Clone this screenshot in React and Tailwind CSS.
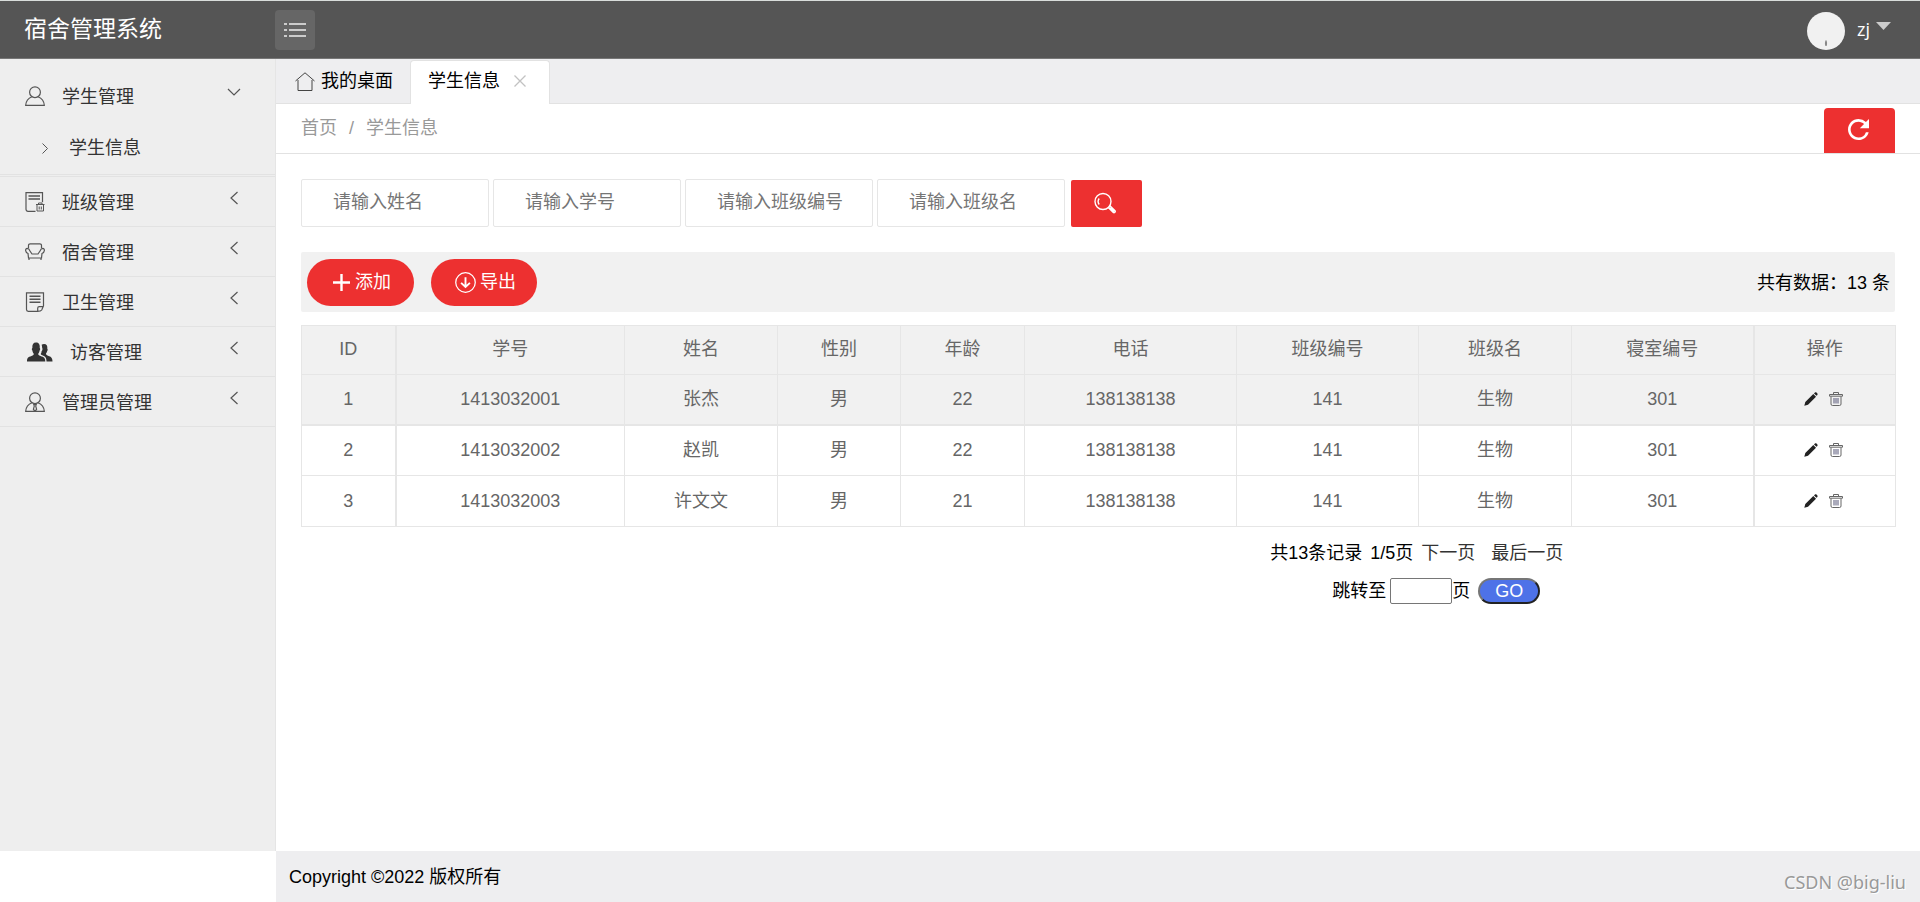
import { useState } from "react";

const menus = [
  { name: "班级管理", icon: ClassIcon },
  { name: "宿舍管理", icon: SofaIcon },
  { name: "卫生管理", icon: NoteIcon },
  { name: "访客管理", icon: VisitorIcon, wide: true },
  { name: "管理员管理", icon: AdminIcon },
];

const filters = ["请输入姓名", "请输入学号", "请输入班级编号", "请输入班级名"];

const columns = [
  { title: "ID", width: "w-[94px]" },
  { title: "学号", width: "w-[229px]" },
  { title: "姓名", width: "w-[153px]" },
  { title: "性别", width: "w-[123px]" },
  { title: "年龄", width: "w-[124px]" },
  { title: "电话", width: "w-[212px]" },
  { title: "班级编号", width: "w-[182px]" },
  { title: "班级名", width: "w-[153px]" },
  { title: "寝室编号", width: "w-[182px]" },
  { title: "操作", width: "w-[142px]" },
];

const students = [
  ["1", "1413032001", "张杰", "男", "22", "138138138", "141", "生物", "301"],
  ["2", "1413032002", "赵凯", "男", "22", "138138138", "141", "生物", "301"],
  ["3", "1413032003", "许文文", "男", "21", "138138138", "141", "生物", "301"],
];

function Icon({ className = "size-5 text-[#555]", children }) {
  return (
    <svg
      className={className}
      viewBox="0 0 20 20"
      fill="none"
      stroke="currentColor"
      strokeWidth="1.2"
      aria-hidden="true"
    >
      {children}
    </svg>
  );
}

function UserIcon() {
  return (
    <Icon>
      <circle cx="10" cy="6.2" r="5.4" />
      <path d="M7 10.8C3.4 12.2 1 15 .7 19.3h18.6C19 15 16.6 12.2 13 10.8" />
    </Icon>
  );
}

function ClassIcon() {
  return (
    <Icon>
      <path d="M10.5 19.300H3A2 2 0 0 1 1 17.300V.7h16.500v9.500" />
      <path d="M3.500 4h11.500M3.500 7h11.500" strokeWidth="1.400" />
      <path d="M11 12.500h8.500M13.500 12v-1h3.500v1M12 13v6h6.500v-6M14.200 14.500v3M16.300 14.500v3" strokeWidth="1" />
    </Icon>
  );
}

function SofaIcon() {
  return (
    <Icon>
      <path d="M3.500 6V3.500A1.700 1.700 0 0 1 5.200 1.800h9.600a1.700 1.700 0 0 1 1.700 1.700V6" />
      <path d="M3.500 16 3 11.500C.3 10.500-.3 6.500 2.300 6.300c1.500 0 2 .8 2.700 2.700l2 3h6l2-3c.7-1.900 1.200-2.700 2.700-2.700 2.600.2 2 4.200-.7 5.200l-.5 4.500z" />
      <path d="M4 16v2M16 16v2" />
    </Icon>
  );
}

function NoteIcon() {
  return (
    <Icon>
      <path d="M12.500 19.300H3.200a1.700 1.700 0 0 1-1.700-1.700V.8h17v13l-1.800 4.200c-.6 1-1.700 1.300-4.200 1.300zM12.700 19v-2.800a1.500 1.500 0 0 1 1.500-1.500h4" />
      <path d="M4.500 4.200h11M4.500 7.200h11M4.500 10.200h11" strokeWidth="1.400" />
    </Icon>
  );
}

function VisitorIcon() {
  return (
    <svg className="h-5 w-[26px]" viewBox="0 0 26 20" fill="currentColor" aria-hidden="true">
      <path d="M0 19.500c0-3.500 1-4.400 4.500-5.500 1.800-.6 2.300-1.100 2.300-2.300-1-1-1.300-2.200-1.400-3.200-.7-.5-.8-2 0-2.500C5 2.500 6.300.5 9 .5s4.200 2 3.700 5.500c.7.5.6 2-.1 2.500-.1 1-.5 2.200-1.400 3.200 0 1.200.5 1.700 2.300 2.300 3.500 1.100 4.800 2 4.800 5.500z" />
      <path d="M19.500 19.500c0-3.300-1-5-4.200-6.200-.9-.4-1.300-.7-1.600-1.200.6-1 .8-2 .9-2.900 1-.9 1.100-2.400.5-3.700 0-1-.2-1.900-.5-2.700C15.300 2.200 16.200 2 17 2c2.600 0 3.700 2 3.300 4.800.6.500.5 1.800-.1 2.300-.1 1-.5 1.800-1.200 2.500 0 1.200.5 1.600 2 2.200 3.200 1.100 4.500 2.200 4.500 5.700z" />
    </svg>
  );
}

function AdminIcon() {
  return (
    <Icon>
      <circle cx="10" cy="6.200" r="5.400" />
      <path d="M7 10.800C3.400 12.200 1 15 .7 19.300h18.600c-.3-4.300-2.700-7.100-6.300-8.500M8.800 12.500h2.400l-.5 1.500.9 3.300L10 19l-1.600-1.700.9-3.300z" />
    </Icon>
  );
}

function Chevron({ open }) {
  return open ? (
    <svg className="h-2 w-[14px]" viewBox="0 0 14 8" fill="none" stroke="#555" strokeWidth="1.2" aria-hidden="true">
      <path d="m1 1 6 6 6-6" />
    </svg>
  ) : (
    <svg className="mr-[2px] h-[14px] w-2" viewBox="0 0 8 14" fill="none" stroke="#555" strokeWidth="1.2" aria-hidden="true">
      <path d="M7.500 1 1 7l6.500 6" />
    </svg>
  );
}

function Header() {
  return (
    <header className="flex h-[59px] shrink-0 items-center border-t border-b border-t-[#d9dddb] border-b-[#777] bg-[#555] text-white">
      <h1 className="w-[275px] shrink-0 pl-6 pb-[2px] text-[23px] leading-8">宿舍管理系统</h1>
      <button
        type="button"
        aria-label="切换菜单"
        className="flex size-10 items-center justify-center rounded-sm bg-[#666]"
      >
        <svg className="h-4 w-[22px]" viewBox="0 0 22 16" stroke="#eee" strokeWidth="1.6" aria-hidden="true">
          <path d="M0 2h3M5 2h17M0 8h3M5 8h17M0 14h3M5 14h17" />
        </svg>
      </button>
      <div className="ml-auto flex items-center pr-[29px]">
        <svg className="mt-[2px] size-[38px]" viewBox="0 0 38 38" aria-hidden="true">
          <circle cx="19" cy="19" r="19" fill="#f1f1f1" />
          <path d="M19 28c1.300 1 1.300 5 .5 6h-1c-.8-1-.8-5 .5-6z" fill="#888" />
        </svg>
        <button type="button" className="ml-3 flex items-center gap-[6px] pb-[2px] font-['Open_Sans',sans-serif] text-[18px] leading-6">
          zj
          <svg className="mb-[5px] h-2 w-[15px]" viewBox="0 0 15 8" fill="#ccc" aria-hidden="true">
            <path d="M0 0h15L7.500 8z" />
          </svg>
        </button>
      </div>
    </header>
  );
}

function Sidebar() {
  return (
    <aside className="mb-[51px] w-[276px] shrink-0 border-r border-[#e5e5e5] bg-[#eee] text-[#333]">
      <nav>
        <div className="h-[116px] border-b border-[#e2e2e2] pt-3">
          <a href="#student" className="flex h-[50px] items-center pl-[25px] pr-[34px]">
            <UserIcon />
            <span className="ml-[17px] flex-1 pt-[2px]">学生管理</span>
            <span className="mb-[9px]">
              <Chevron open />
            </span>
          </a>
          <a href="#student-list" className="flex h-[52px] items-center pl-[42px] pt-[2px]">
            <svg className="h-[11px] w-[6px]" viewBox="0 0 6 11" fill="none" stroke="#555" aria-hidden="true">
              <path d="m.5.500 5 5-5 5" />
            </svg>
            <span className="ml-[21px]">学生信息</span>
          </a>
        </div>
        <ul className="mt-px border-t border-[#e2e2e2]">
          {menus.map(({ name, icon: MenuIcon, wide }) => (
            <li key={name} className="border-b border-[#e2e2e2]">
              <a
                href="#menu"
                className={`flex h-[49px] items-center pr-[35px] ${wide ? "pl-[27px]" : "pl-[25px]"}`}
              >
                <MenuIcon />
                <span className="ml-[17px] flex-1 pt-[2px]">{name}</span>
                <span className="mb-[7px]">
                  <Chevron />
                </span>
              </a>
            </li>
          ))}
        </ul>
      </nav>
    </aside>
  );
}

function Tabs() {
  return (
    <div className="flex h-[45px] shrink-0 items-stretch border-b border-[#e2e2e2] bg-[#eeeef0] text-black">
      <button type="button" className="flex w-[134px] items-center gap-[6px] pl-[19px]">
        <svg className="h-[19px] w-5" viewBox="0 0 20 19" fill="none" stroke="#444" aria-hidden="true">
          <path d="M.5 9 10 .8 19.500 9M3 8v10.500h14V8" />
        </svg>
        我的桌面
      </button>
      <div className="mt-px -mb-px flex w-[140px] items-center rounded-t-sm border-x border-t border-[#e2e2e2] bg-white pb-[3px] pl-[17px]">
        <button type="button">学生信息</button>
        <button type="button" aria-label="关闭" className="ml-[14px]">
          <svg className="size-3" viewBox="0 0 12 12" stroke="#c2c2c2" strokeWidth="1.3" aria-hidden="true">
            <path d="m.5.500 11 11M11.500.500l-11 11" />
          </svg>
        </button>
      </div>
    </div>
  );
}

function Breadcrumb() {
  return (
    <div className="flex h-[50px] shrink-0 items-end justify-between border-b border-[#e2e2e2] px-[25px] text-[#999]">
      <div className="flex h-[49px] items-center gap-3 pb-[2px]">
        <a href="#home">首页</a>
        <span>/</span>
        <a href="#student-list">学生信息</a>
      </div>
      <button
        type="button"
        aria-label="刷新"
        className="flex h-[45px] w-[71px] items-center justify-center rounded-t-sm bg-[#ed3030] pr-[3px] pb-[2px]"
      >
        <svg className="size-[21px]" viewBox="4 4 16 16" fill="#fff" aria-hidden="true">
          <path d="M17.650 6.350A7.958 7.958 0 0 0 12 4c-4.420 0-7.990 3.580-7.990 8s3.570 8 7.990 8c3.730 0 6.840-2.550 7.730-6h-2.080A5.990 5.990 0 0 1 12 18c-3.310 0-6-2.690-6-6s2.690-6 6-6c1.660 0 3.140.690 4.220 1.780L13 11h7V4l-2.350 2.350z" />
        </svg>
      </button>
    </div>
  );
}

function SearchBar() {
  return (
    <form className="flex items-end gap-1" onSubmit={(e) => e.preventDefault()}>
      {filters.map((text) => (
        <input
          key={text}
          type="text"
          placeholder={text}
          aria-label={text}
          className="h-12 w-[188px] rounded-xs border border-[#e6e6e6] pb-px pl-[31px] placeholder:text-[#757575]"
        />
      ))}
      <button
        type="submit"
        aria-label="搜索"
        className="ml-[2px] flex h-[47px] w-[71px] items-center justify-center rounded-xs bg-[#ed3030] pr-[3px] pb-[2px]"
      >
        <svg className="size-[22px]" viewBox="0 0 22 22" fill="none" stroke="#fff" strokeWidth="1.4" aria-hidden="true">
          <circle cx="9" cy="9.500" r="8" />
          <path d="M5.200 12.500a5 5 0 0 1 0-6M14.500 15.800l1.700-1.700 4.800 4.700c.8 1-.7 2.500-1.700 1.700zM16 15.800l4 4" />
        </svg>
      </button>
    </form>
  );
}

function Toolbar() {
  return (
    <div className="mt-[25px] flex h-[60px] items-center justify-between rounded-xs bg-[#f1f1f1] pr-[5px] pl-[6px]">
      <div className="flex gap-[17px] text-white">
        <button type="button" className="flex h-[47px] w-[107px] items-center gap-[5px] rounded-full bg-[#ed3030] pl-[26px]">
          <svg className="size-[17px]" viewBox="0 0 17 17" stroke="currentColor" strokeWidth="2.4" aria-hidden="true">
            <path d="M8.500 0v17M0 8.500h17" />
          </svg>
          添加
        </button>
        <button type="button" className="flex h-[47px] w-[106px] items-center gap-1 rounded-full bg-[#ed3030] pl-6">
          <Icon className="size-[21px]">
            <circle cx="10" cy="10" r="9.300" />
            <path d="M10 5v9M5.800 10.300 10 14.300l4.200-4" strokeWidth="1.8" />
          </Icon>
          导出
        </button>
      </div>
      <span className="pt-[2px] text-black">共有数据：13 条</span>
    </div>
  );
}

function RowActions() {
  return (
    <div className="flex items-center justify-center gap-[11px] pr-[2px] pb-px">
      <button type="button" aria-label="编辑">
        <svg className="size-[14px]" viewBox="0 0 14 14" fill="#222" aria-hidden="true">
          <path d="m.3 13.700 1-3.700 8-8 2.700 2.700-8 8zM10 1.400l.9-.9c1.200-.9 3.300 1 2.500 2.400l-.9.900z" />
        </svg>
      </button>
      <button type="button" aria-label="删除">
        <svg className="size-[14px]" viewBox="0 0 14 14" fill="none" stroke="#666" aria-hidden="true">
          <path d="M4.500 2V.5h5V2M.5 2.500h13v1.700H.5zM2 4.500V12a1.500 1.500 0 0 0 1.500 1.500h7A1.500 1.500 0 0 0 12 12V4.500" />
          <path d="M5 6v5.500M7 6v5.500M9 6v5.500" stroke="#557" />
        </svg>
      </button>
    </div>
  );
}

function edge(i) {
  if (i === 0) return "border-r-2";
  if (i === columns.length - 1) return "border-l-2";
  return "";
}

function StudentTable() {
  return (
    <table className="mt-[13px] w-full table-fixed border-collapse text-center text-[#666]">
      <colgroup>
        {columns.map((c) => (
          <col key={c.title} className={c.width} />
        ))}
      </colgroup>
      <thead>
        <tr className="h-[49px] bg-[#f1f1f1]">
          {columns.map((c, i) => (
            <th key={c.title} className={`border border-[#e6e6e6] pb-[2px] font-normal ${edge(i)}`}>
              {c.title}
            </th>
          ))}
        </tr>
      </thead>
      <tbody>
        {students.map((row, r) => (
          <tr
            key={row[0]}
            className={r === 0 ? "h-[50px] border-b-2 border-[#e6e6e6] bg-[#f1f1f1]" : "h-[51px]"}
          >
            {row.map((cell, i) => (
              <td key={i} className={`border border-[#e6e6e6] pb-px ${edge(i)}`}>
                {cell}
              </td>
            ))}
            <td className={`border border-[#e6e6e6] ${edge(columns.length - 1)}`}>
              <RowActions />
            </td>
          </tr>
        ))}
      </tbody>
    </table>
  );
}

function Pagination() {
  const [page, setPage] = useState("");
  return (
    <div className="mt-3 ml-[60.8%] text-black">
      <div className="flex h-7 items-center">
        <span>共13条记录</span>
        <span className="ml-2">1/5页</span>
        <a href="#next" className="ml-2 text-[#333]">下一页</a>
        <a href="#last" className="ml-4 text-[#333]">最后一页</a>
      </div>
      <div className="mt-[11px] flex h-[26px] items-center pl-[62px]">
        <label htmlFor="page">跳转至</label>
        <input
          id="page"
          type="text"
          value={page}
          onChange={(e) => setPage(e.target.value)}
          className="ml-1 h-[26px] w-[62px] rounded-xs border border-[#767676] px-1"
        />
        <span>页</span>
        <button
          type="button"
          className="ml-2 h-[26px] w-[62px] rounded-full border-2 border-t-[#767676] border-r-[#222] border-b-[#222] border-l-[#767676] bg-[#4e72e8] leading-[20px] text-white"
        >
          GO
        </button>
      </div>
    </div>
  );
}

function App() {
  return (
    <div className="flex min-h-screen flex-col bg-white font-['Liberation_Sans','Noto_Sans_CJK_SC',sans-serif] text-[18px] leading-6">
      <Header />
      <div className="flex flex-1">
        <Sidebar />
        <main className="flex min-w-0 flex-1 flex-col">
          <Tabs />
          <Breadcrumb />
          <section className="flex-1 px-[25px] pt-[25px]">
            <SearchBar />
            <Toolbar />
            <StudentTable />
            <Pagination />
          </section>
          <footer className="flex h-[51px] items-center justify-between bg-[#eeeef0] pr-[14px] pl-[13px] text-black">
            <span>Copyright ©2022 版权所有</span>
            <span className="pt-[10px] font-['Noto_Sans',sans-serif] text-[#999] [text-shadow:1px_1px_0_#fff]">
              CSDN @big-liu
            </span>
          </footer>
        </main>
      </div>
    </div>
  );
}

export default App;
